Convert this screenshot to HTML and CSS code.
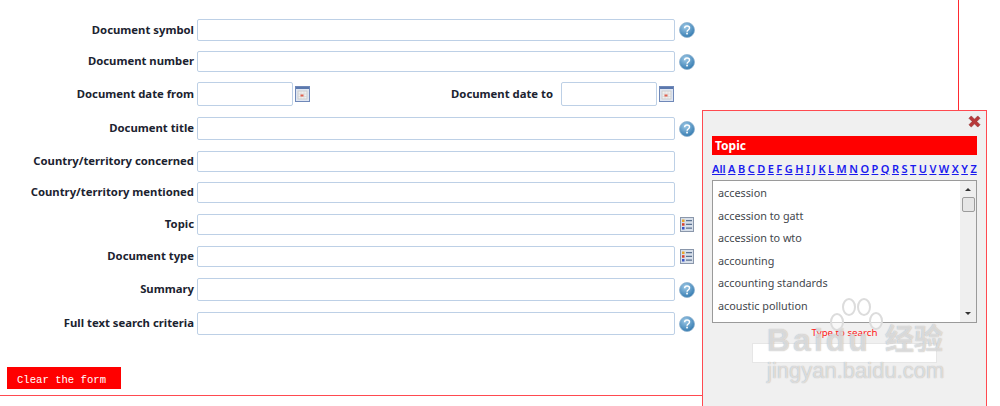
FILE: index.html
```html
<!DOCTYPE html>
<html lang="en">
<head>
    <meta charset="UTF-8">
    <title>Document search</title>
    <link rel="stylesheet" href="styles.css">
</head>
<body>
    <svg class="sprites" width="0" height="0">
        <defs>
            <radialGradient id="helpFill" cx="40%" cy="30%" r="75%">
                <stop offset="0" stop-color="#9cc8e6"/>
                <stop offset="1" stop-color="#2f77ae"/>
            </radialGradient>
            <symbol id="help" viewBox="0 0 16 16">
                <circle cx="8" cy="8" r="7.500" fill="url(#helpFill)" stroke="#8fb3cf" stroke-width="0.8"/>
                <path d="M5.600 6.200C5.700 4.700 6.800 4 8 4c1.400 0 2.500.8 2.500 2.100 0 1.900-2.400 1.900-2.400 3.600" fill="none" stroke="#fff" stroke-width="1.500"/>
                <rect x="7.200" y="10.700" width="1.700" height="1.700" fill="#fff"/>
            </symbol>
            <symbol id="calendar" viewBox="0 0 15 16">
                <rect x="0.500" y="0.500" width="14" height="15" fill="#dfe6f2" stroke="#6f88b8"/>
                <rect x="1" y="1" width="13" height="2" fill="#5b78ad"/>
                <rect x="3" y="5" width="9" height="8" fill="#efefef" stroke="#c4c4c4" stroke-width="0.7"/>
                <path d="M6 5v8M9 5v8M3 8h9M3 10.500h9" stroke="#d4d4d4" stroke-width="0.6"/>
                <rect x="5.500" y="8.500" width="3" height="2" fill="#e0604f"/>
            </symbol>
            <symbol id="list" viewBox="0 0 14 15">
                <rect x="0.500" y="0.500" width="13" height="14" fill="#d7dfea" stroke="#8a97ab"/>
                <rect x="2" y="2.500" width="2.500" height="2.500" fill="#e8a52c"/>
                <rect x="2" y="6.200" width="2.500" height="2.500" fill="#d8402e"/>
                <rect x="2" y="10" width="2.500" height="2.500" fill="#3a55c4"/>
                <path d="M6 3.700h6M6 7.400h6M6 11.200h6" stroke="#5c7290" stroke-width="1.200"/>
            </symbol>
        </defs>
    </svg>

    <div class="page">
        <form class="search-form">
            <div class="row row-1">
                <label>Document symbol</label>
                <input type="text" class="field">
                <svg class="help-icon"><use href="#help"/></svg>
            </div>
            <div class="row row-2">
                <label>Document number</label>
                <input type="text" class="field">
                <svg class="help-icon"><use href="#help"/></svg>
            </div>
            <div class="row row-3">
                <label>Document date from</label>
                <input type="text" class="field-date">
                <svg class="cal-icon"><use href="#calendar"/></svg>
                <label class="label-to">Document date to</label>
                <input type="text" class="field-date">
                <svg class="cal-icon"><use href="#calendar"/></svg>
            </div>
            <div class="row row-4">
                <label>Document title</label>
                <input type="text" class="field">
                <svg class="help-icon"><use href="#help"/></svg>
            </div>
            <div class="row row-5 row-tight">
                <label>Country/territory concerned</label>
                <input type="text" class="field">
            </div>
            <div class="row row-5">
                <label>Country/territory mentioned</label>
                <input type="text" class="field">
            </div>
            <div class="row row-5">
                <label>Topic</label>
                <input type="text" class="field">
                <svg class="list-icon"><use href="#list"/></svg>
            </div>
            <div class="row row-5">
                <label>Document type</label>
                <input type="text" class="field">
                <svg class="list-icon"><use href="#list"/></svg>
            </div>
            <div class="row row-4">
                <label>Summary</label>
                <input type="text" class="field">
                <svg class="help-icon"><use href="#help"/></svg>
            </div>
            <div class="row row-4">
                <label>Full text search criteria</label>
                <input type="text" class="field">
                <svg class="help-icon"><use href="#help"/></svg>
            </div>
            <button type="button" class="btn-clear">Clear the form</button>
        </form>
        <div class="form-end"></div>
    </div>

    <div class="side-line"></div>

    <div class="topic-popup">
        <div class="popup-close">
            <svg width="13" height="13" viewBox="0 0 14 14"><path d="M1 3.500L3.500 1 7 4.500 10.500 1 13 3.500 9.500 7 13 10.500 10.500 13 7 9.500 3.500 13 1 10.500 4.500 7z" fill="#b8393a" stroke="#8e3030" stroke-width="0.6"/></svg>
        </div>
        <div class="popup-title">Topic</div>
        <div class="alpha">
            <a href="#">All</a><a href="#">A</a><a href="#">B</a><a href="#">C</a><a href="#">D</a><a href="#">E</a><a href="#">F</a><a href="#">G</a><a href="#">H</a><a href="#">I</a><a href="#">J</a><a href="#">K</a><a href="#">L</a><a href="#">M</a><a href="#">N</a><a href="#">O</a><a href="#">P</a><a href="#">Q</a><a href="#">R</a><a href="#">S</a><a href="#">T</a><a href="#">U</a><a href="#">V</a><a href="#">W</a><a href="#">X</a><a href="#">Y</a><a href="#">Z</a>
        </div>
        <div class="topic-box">
            <ul class="topic-list">
                <li>accession</li>
                <li>accession to gatt</li>
                <li>accession to wto</li>
                <li>accounting</li>
                <li>accounting standards</li>
                <li>acoustic pollution</li>
            </ul>
            <div class="scrollbar">
                <span class="arrow-up"></span>
                <span class="thumb"></span>
                <span class="arrow-down"></span>
            </div>
        </div>
        <div class="type-hint">Type to search</div>
        <input type="text" class="type-input">
    </div>

    <div class="watermark">
        <svg class="wm-paw" width="56" height="42" viewBox="0 0 56 42">
            <g fill="rgba(255,255,255,0.55)" stroke="#dcdcdc" stroke-width="2">
                <ellipse cx="9" cy="24" rx="6" ry="8"/>
                <ellipse cx="21" cy="9" rx="6" ry="8"/>
                <ellipse cx="36" cy="9" rx="6" ry="8"/>
                <ellipse cx="48" cy="23" rx="6" ry="8"/>
            </g>
        </svg>
        <div class="wm-logo"><span class="wm-en">Baidu</span><span class="wm-cn">经验</span></div>
        <div class="wm-url">jingyan.baidu.com</div>
    </div>
</body>
</html>
```

FILE: styles.css
```css
html, body {
    margin: 0;
    height: 406px;
    overflow: hidden;
}

body {
    font-family: "Noto Sans", Tahoma, sans-serif;
    background-color: #fff;
    position: relative;
}

.sprites {
    position: absolute;
}

.page {
    width: 703px;
}

.search-form {
    height: 395px;
    padding-top: 19px;
    box-sizing: border-box;
    position: relative;
}

.form-end {
    height: 1px;
    background-color: #ff4a50;
}

.row {
    display: flex;
    align-items: center;
}

.row-1 { height: 22px; margin-bottom: 10px; }
.row-2 { height: 21px; margin-bottom: 10px; }
.row-3 { height: 24px; margin-bottom: 11px; }
.row-4 { height: 23px; margin-bottom: 11px; }
.row-5 { height: 21px; margin-bottom: 11px; }
.row-tight { margin-bottom: 10px; }

.row label {
    width: 197px;
    padding: 0 3px 2px 0;
    box-sizing: border-box;
    text-align: right;
    font-size: 11.300px;
    font-weight: bold;
    color: #1b2330;
    white-space: nowrap;
    flex: none;
}

.row .label-to {
    width: 251px;
    padding-right: 8px;
}

.field, .field-date {
    height: 100%;
    box-sizing: border-box;
    margin: 0;
    padding: 0;
    border: 1px solid #bdd0e6;
    border-radius: 2px;
    background-color: #fff;
    flex: none;
}

.field { width: 478px; }
.field-date { width: 96px; }

.help-icon {
    width: 16px;
    height: 16px;
    margin-left: 4px;
}

.cal-icon {
    width: 15px;
    height: 16px;
    margin-left: 2px;
}

.list-icon {
    width: 14px;
    height: 15px;
    margin-left: 5px;
}

.btn-clear {
    position: absolute;
    left: 7px;
    top: 367px;
    width: 114px;
    height: 22px;
    padding: 3px 0 0 10px;
    border: none;
    background-color: #ff0000;
    color: #fff;
    font-family: "Liberation Mono", monospace;
    font-size: 10.600px;
    text-align: left;
}

.side-line {
    position: absolute;
    left: 958px;
    top: 0;
    width: 1px;
    height: 110px;
    background-color: #ff2a30;
}

.topic-popup {
    position: absolute;
    left: 702px;
    top: 110px;
    width: 285px;
    height: 296px;
    box-sizing: border-box;
    border: 1px solid #ff4a50;
    border-bottom: none;
    background-color: #f0f0f0;
    padding: 0 9px;
}

.popup-close {
    display: flex;
    justify-content: flex-end;
    height: 24px;
    padding-top: 4px;
    box-sizing: border-box;
    margin-right: -4px;
}

.popup-title {
    height: 19px;
    line-height: 19px;
    margin-top: 1px;
    background-color: #ff0000;
    color: #fff;
    font-size: 12px;
    font-weight: bold;
    padding-left: 3px;
}

.alpha {
    display: flex;
    justify-content: space-between;
    margin-top: 6px;
    height: 19px;
    line-height: 16px;
    font-size: 11px;
    font-weight: 600;
}

.alpha a {
    color: #1a1aee;
}

.topic-box {
    display: flex;
    height: 143px;
    box-sizing: border-box;
    border: 1px solid #9a9a9a;
    background-color: #fff;
}

.topic-list {
    flex: 1;
    list-style: none;
    margin: 0;
    padding: 1px 0 0 5px;
    font-size: 10.800px;
    color: #44474d;
}

.topic-list li {
    height: 22.500px;
    line-height: 22px;
}

.scrollbar {
    width: 16px;
    background-color: #efefef;
    display: flex;
    flex-direction: column;
    align-items: center;
}

.arrow-up {
    margin-top: 7px;
    border: 3px solid transparent;
    border-top: none;
    border-bottom: 3px solid #333;
}

.thumb {
    width: 13px;
    height: 15px;
    margin-top: 6px;
    box-sizing: border-box;
    border: 1px solid #9c9c9c;
    border-radius: 2px;
    background-color: #e6e6e6;
}

.arrow-down {
    margin-top: auto;
    margin-bottom: 7px;
    border: 3px solid transparent;
    border-bottom: none;
    border-top: 3px solid #333;
}

.type-hint {
    margin-top: 3px;
    text-align: center;
    font-size: 9.700px;
    color: #ff1a1a;
    height: 14px;
    line-height: 14px;
}

.type-input {
    display: block;
    width: 185px;
    height: 20px;
    box-sizing: border-box;
    margin: 3px 0 0 40px;
    padding: 0;
    border: 1px solid #e6e6e6;
    background-color: #fff;
}

.watermark {
    position: absolute;
    left: 767px;
    top: 322px;
    width: 176px;
    color: rgba(255, 255, 255, 0.6);
    text-shadow: 0 0 1px rgba(140, 140, 140, 0.8);
    pointer-events: none;
}

.wm-paw {
    position: absolute;
    left: 61px;
    top: -24px;
}

.wm-logo {
    display: flex;
    justify-content: space-between;
    font-family: "Liberation Sans", "Noto Sans CJK SC", sans-serif;
    font-size: 32px;
    font-weight: bold;
    line-height: 36px;
    white-space: nowrap;
}

.wm-en {
    letter-spacing: 3px;
}

.wm-cn {
    font-size: 29px;
}

.wm-url {
    font-family: "Liberation Sans", sans-serif;
    font-size: 22px;
    line-height: 24px;
    margin-top: 1px;
    white-space: nowrap;
}
```
